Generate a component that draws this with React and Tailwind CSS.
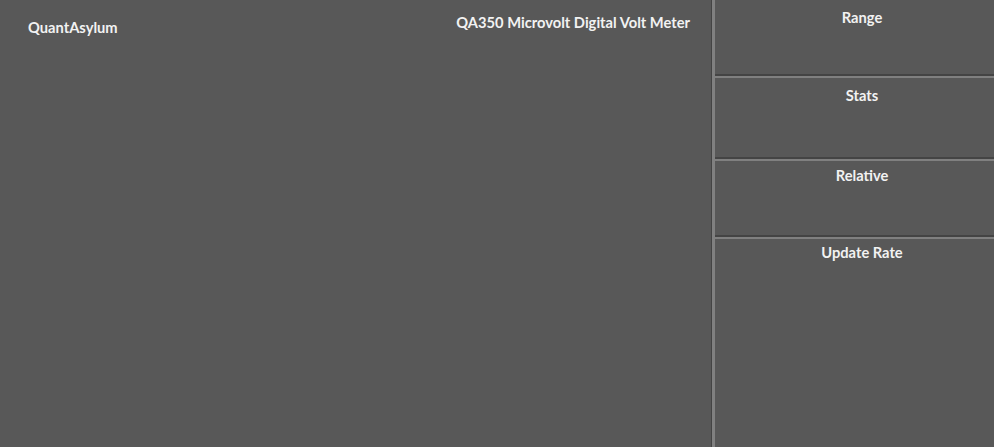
import React from 'react';

const panels = [
  { title: 'Range', h: 'h-[74px]', pt: 'pt-[9px]' },
  { title: 'Stats', h: 'h-[79px]', pt: 'pt-[9px]' },
  { title: 'Relative', h: 'h-[74px]', pt: 'pt-[6px]' },
];

function Separator() {
  return (
    <div className="shrink-0">
      <div className="h-[2px] bg-[#444444]" />
      <div className="h-[2px] bg-[#808080]" />
    </div>
  );
}

export default function App() {
  return (
    <div
      className="w-[994px] h-[447px] bg-[#585858] flex overflow-hidden text-[14.7px] font-bold text-[#f2f2f2]"
      style={{ fontFamily: 'Lato, "Open Sans", sans-serif' }}
    >
      {/* Main area */}
      <div className="w-[711px] shrink-0 relative">
        <div className="absolute left-[28px] top-[19px] leading-[17px]">QuantAsylum</div>
        <div className="absolute right-[21px] top-[14px] leading-[17px]">
          QA350 Microvolt Digital Volt Meter
        </div>
      </div>

      {/* Divider */}
      <div className="w-[1px] bg-[#444444] shrink-0" />
      <div className="w-[3px] bg-[#808080] shrink-0" />

      {/* Side panels */}
      <div className="flex-1 flex flex-col">
        {panels.map((p) => (
          <React.Fragment key={p.title}>
            <div className={`${p.h} ${p.pt} shrink-0 pl-[15px] text-center leading-[17px]`}>{p.title}</div>
            <Separator />
          </React.Fragment>
        ))}
        <div className="flex-1 pt-[5px] pl-[15px] text-center leading-[17px]">Update Rate</div>
      </div>
    </div>
  );
}
